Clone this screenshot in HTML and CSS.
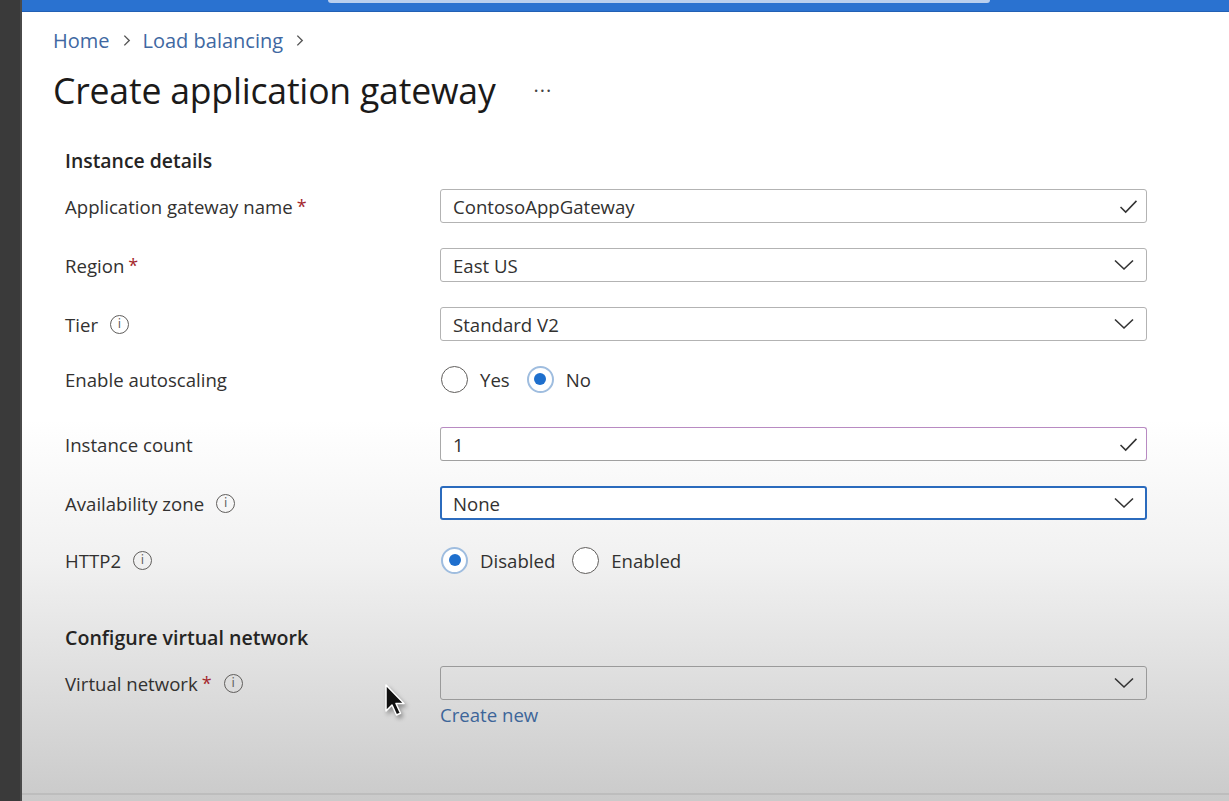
FILE: index.html
```html
<!DOCTYPE html>
<html lang="en">
<head>
<meta charset="utf-8">
<title>Create application gateway</title>
<link rel="stylesheet" href="styles.css">
</head>
<body>
<div class="shell">
  <div class="leftbar"></div>
  <div class="main">
    <div class="topbar"><div class="search"></div></div>
    <div class="content">
      <nav class="crumbs">
        <a class="crumb">Home</a>
        <svg class="sep" viewBox="0 0 12 12"><path d="M4 1.5 L8.5 6 L4 10.5" fill="none" stroke="#555" stroke-width="1.3"/></svg>
        <a class="crumb">Load balancing</a>
        <svg class="sep" viewBox="0 0 12 12"><path d="M4 1.5 L8.5 6 L4 10.5" fill="none" stroke="#555" stroke-width="1.3"/></svg>
      </nav>
      <div class="titlebar">
        <h1 class="title">Create application gateway</h1>
        <span class="more">···</span>
      </div>

      <section class="form">
        <h2 class="section">Instance details</h2>

        <div class="row">
          <div class="label">Application gateway name <span class="req">*</span></div>
          <div class="field">
            <div class="input"><span class="val">ContosoAppGateway</span>
              <svg class="ico check" viewBox="0 0 20 16"><path d="M1.5 8.5 L7 14 L18.5 2" fill="none" stroke="#333" stroke-width="1.6"/></svg>
            </div>
          </div>
        </div>

        <div class="row">
          <div class="label">Region <span class="req">*</span></div>
          <div class="field">
            <div class="input"><span class="val">East US</span>
              <svg class="ico chev" viewBox="0 0 20 12"><path d="M1 1.5 L10 10 L19 1.5" fill="none" stroke="#333" stroke-width="1.6"/></svg>
            </div>
          </div>
        </div>

        <div class="row">
          <div class="label">Tier <span class="info">i</span></div>
          <div class="field">
            <div class="input"><span class="val">Standard V2</span>
              <svg class="ico chev" viewBox="0 0 20 12"><path d="M1 1.5 L10 10 L19 1.5" fill="none" stroke="#333" stroke-width="1.6"/></svg>
            </div>
          </div>
        </div>

        <div class="row radio-row first-radio">
          <div class="label">Enable autoscaling</div>
          <div class="field radios">
            <label class="radio"><span class="dot"></span>Yes</label>
            <label class="radio on"><span class="dot"></span>No</label>
          </div>
        </div>

        <div class="row after-radio">
          <div class="label">Instance count</div>
          <div class="field">
            <div class="input purple"><span class="val">1</span>
              <svg class="ico check" viewBox="0 0 20 16"><path d="M1.5 8.5 L7 14 L18.5 2" fill="none" stroke="#333" stroke-width="1.6"/></svg>
            </div>
          </div>
        </div>

        <div class="row">
          <div class="label">Availability zone <span class="info">i</span></div>
          <div class="field">
            <div class="input focus"><span class="val">None</span>
              <svg class="ico chev" viewBox="0 0 20 12"><path d="M1 1.5 L10 10 L19 1.5" fill="none" stroke="#333" stroke-width="1.6"/></svg>
            </div>
          </div>
        </div>

        <div class="row radio-row">
          <div class="label">HTTP2 <span class="info">i</span></div>
          <div class="field radios">
            <label class="radio on"><span class="dot"></span>Disabled</label>
            <label class="radio"><span class="dot"></span>Enabled</label>
          </div>
        </div>

        <h2 class="section vnet-head">Configure virtual network</h2>

        <div class="row vnet-row">
          <div class="label">Virtual network <span class="req">*</span> <span class="info">i</span></div>
          <div class="field">
            <div class="input empty">
              <svg class="ico chev" viewBox="0 0 20 12"><path d="M1 1.5 L10 10 L19 1.5" fill="none" stroke="#333" stroke-width="1.6"/></svg>
            </div>
            <a class="link">Create new</a>
          </div>
        </div>
      </section>
      <div class="footer-line"></div>
    </div>
  </div>
</div>
<svg class="cursor" viewBox="0 0 22 34"><path d="M2 1 L2 27 L8 21 L12.5 31 L16.5 29.2 L12 19.5 L20 19.5 Z" fill="#111" stroke="#fff" stroke-width="1.5" stroke-linejoin="round"/></svg>
</body>
</html>
```

FILE: styles.css
```css
* { box-sizing: border-box; }
html, body { margin: 0; height: 100%; }
body {
  font-family: "Open Sans", "Noto Sans", "Liberation Sans", sans-serif;
  color: #323130;
  overflow: hidden;
  width: 1229px;
  height: 801px;
  position: relative;
}
.shell { display: flex; height: 801px; }
.leftbar {
  width: 22px;
  flex: none;
  background: #3a3a3a;
  border-right: 2px solid #4a4a4a;
}
.main {
  flex: 1;
  display: flex;
  flex-direction: column;
  background: linear-gradient(to bottom, #ffffff 0px, #ffffff 420px, #f1f1f1 560px, #e1e1e1 660px, #d1d1d1 760px, #cacaca 801px);
}
.topbar {
  height: 12px;
  background: #2a72d0;
  flex: none;
  position: relative;
  border-bottom: 1px solid #2260b4;
}
.search {
  position: absolute;
  left: 306px;
  width: 662px;
  top: 0;
  height: 3px;
  background: #b9cfee;
  border-radius: 0 0 3px 3px;
}
.content {
  flex: 1;
  padding-left: 31px;
  display: flex;
  flex-direction: column;
}
.crumbs {
  display: flex;
  align-items: center;
  gap: 10px;
  margin-top: 15px;
  height: 26px;
}
.crumb {
  font-size: 20px;
  color: #4068a2;
}
.sep { width: 13px; height: 13px; }
.titlebar {
  display: flex;
  align-items: center;
  height: 44px;
  margin-top: 15px;
}
.title {
  margin: 0;
  font-weight: 400;
  font-size: 35.6px;
  color: #1b1a19;
  letter-spacing: -0.2px;
}
.more {
  margin-left: 38px;
  font-size: 20px;
  color: #444;
  letter-spacing: 1px;
}
.form {
  padding-left: 12px;
  width: 1094px;
  display: flex;
  flex-direction: column;
}
.section {
  margin: 37px 0 0 0;
  font-size: 19.4px;
  font-weight: 600;
  height: 24px;
  line-height: 24px;
  color: #252423;
}
.row {
  display: flex;
  align-items: center;
  margin-top: 26px;
}
.section + .row { margin-top: 16px; }
.row + .row { margin-top: 25px; }
.first-radio.row { margin-top: 23px; }
.after-radio.row { margin-top: 33px; }
.label {
  width: 375px;
  flex: none;
  font-size: 18.6px;
  display: flex;
  align-items: center;
  gap: 4px;
  color: #323130;
}
.req { color: #a4262c; font-size: 18px; }
.info {
  display: inline-flex;
  align-items: center;
  justify-content: center;
  width: 19px;
  height: 19px;
  border: 1.3px solid #605e5c;
  border-radius: 50%;
  font-size: 12px;
  color: #605e5c;
  margin-left: 8px;
  line-height: 1;
  font-family: "DejaVu Sans", sans-serif;
}
.field { width: 707px; flex: none; position: relative; }
.input {
  height: 34px;
  border: 1px solid #b3b3b3;
  border-radius: 3px;
  background: #fff;
  display: flex;
  align-items: center;
  padding-left: 12px;
  padding-right: 8px;
  position: relative;
}
.val { font-size: 18.6px; color: #323130; flex: 1; }
.input.purple { border-color: #b88ac2 #b88ac2 #a0a0a0 #a9a9a9; }
.input.focus { border: 2px solid #2b6bbd; padding-left: 11px; }
.input.empty { background: transparent; border-color: #9a9a9a; justify-content: flex-end; }
.ico { margin-left: auto; }
.check { width: 19px; height: 15px; margin-right: 0; }
.chev { width: 20px; height: 12px; margin-right: 4px; }
.input.focus .chev { margin-right: 3px; }
.radio-row { height: 30px; }
.radios { display: flex; align-items: center; gap: 17px; padding-left: 1px; }
.radio {
  display: flex;
  align-items: center;
  gap: 12px;
  font-size: 18.6px;
  color: #323130;
}
.dot {
  width: 27px;
  height: 27px;
  border-radius: 50%;
  border: 1.5px solid #605e5c;
  display: flex;
  align-items: center;
  justify-content: center;
  background: #fff;
}
.radio.on .dot { border: 2px solid #9fbddf; }
.radio.on .dot::after {
  content: "";
  width: 12px;
  height: 12px;
  border-radius: 50%;
  background: #1e6fcd;
}
.vnet-head { margin-top: 51px; font-size: 19.6px; }
.vnet-row { align-items: flex-start; margin-top: 17px; }
.vnet-row .label { height: 34px; }
.link {
  display: block;
  font-size: 18.6px;
  color: #3d6599;
  margin-top: 3px;
  line-height: 24px;
}
.footer-line {
  margin-top: auto;
  margin-bottom: 6px;
  height: 2px;
  margin-left: -31px;
  background: #bdbdbd;
}
.cursor {
  position: absolute;
  left: 384px;
  top: 684px;
  width: 22px;
  height: 34px;
  filter: drop-shadow(2px 3px 2px rgba(0,0,0,0.35));
}
```
